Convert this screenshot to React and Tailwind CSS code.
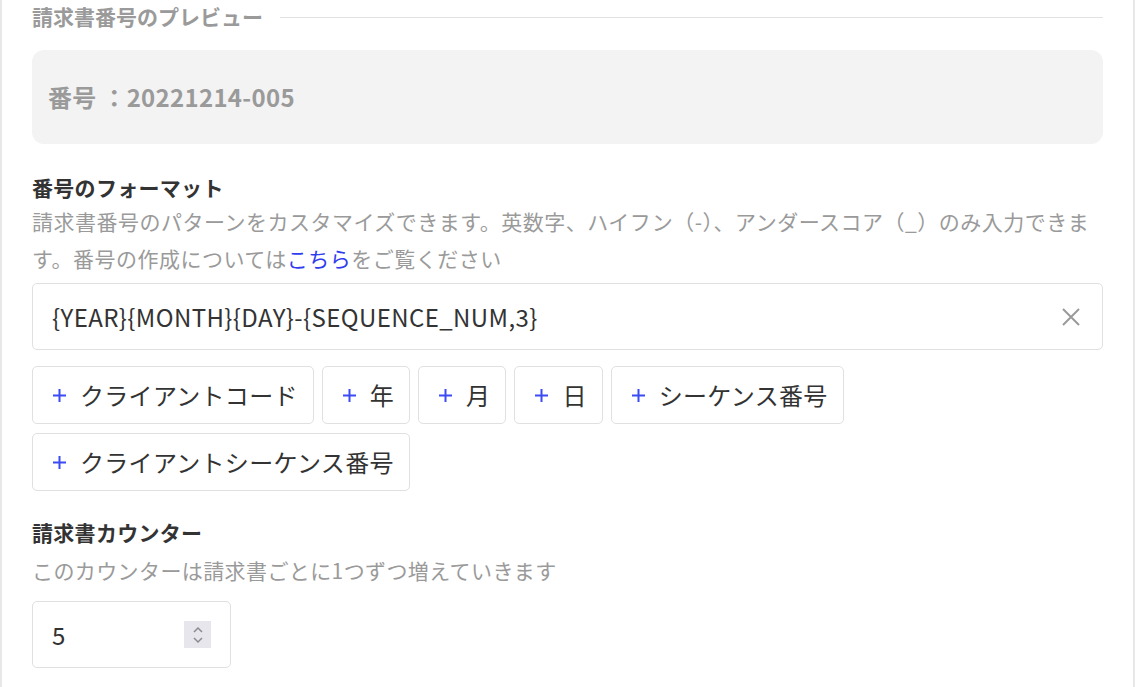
import React from "react";

const font = { fontFamily: '"Noto Sans CJK JP", "Noto Sans", sans-serif' };

const chips = [
  "クライアントコード",
  "年",
  "月",
  "日",
  "シーケンス番号",
  "クライアントシーケンス番号",
];

const Plus = () => (
  <svg width="15" height="15" viewBox="0 0 15 15" className="shrink-0">
    <path d="M7.5 1v13M1 7.5h13" stroke="#3b4bf5" strokeWidth="2" />
  </svg>
);

export default function App() {
  return (
    <div
      className="min-h-screen bg-white border-x-2 border-[#e8e8e8] px-[30px] pt-[2px] text-[#333]"
      style={font}
    >
      {/* preview header */}
      <div className="flex items-center h-[30px]">
        <span className="text-[21px] font-bold text-[#9a9a9a]">請求書番号のプレビュー</span>
        <div className="flex-1 ml-[17px] h-px bg-[#e2e2e2]" />
      </div>

      <div className="mt-[18px] h-[94px] rounded-[12px] bg-[#f3f3f3] flex items-center pl-[16px]">
        <span className="text-[24px] font-bold text-[#9a9a9a] tracking-[0.3px]">
          番号 ：20221214-005
        </span>
      </div>

      {/* format */}
      <div className="mt-[28px] text-[21px] font-bold leading-[30px] tracking-[0.3px] text-[#333]">
        番号のフォーマット
      </div>
      <p className="mt-[1px] text-[21px] leading-[37px] tracking-[0.5px] text-[#9a9a9a]">
        請求書番号のパターンをカスタマイズできます。英数字、ハイフン（-）、アンダースコア（_）のみ入力できます。番号の作成については
        <span className="text-[#2f3cf0]">こちら</span>をご覧ください
      </p>

      <div className="mt-[6px] h-[67px] border border-[#e0e0e0] rounded-[5px] flex items-center pl-[19px] pr-[21px]">
        <span className="flex-1 text-[24px] tracking-[0.4px] text-[#333]">
          {"{YEAR}{MONTH}{DAY}-{SEQUENCE_NUM,3}"}
        </span>
        <svg width="20" height="20" viewBox="0 0 20 20">
          <path d="M2 2l16 16M18 2L2 18" stroke="#9a9a9a" strokeWidth="2" />
        </svg>
      </div>

      <div className="mt-[16px] flex flex-wrap gap-x-[8px] gap-y-[9px] max-w-[820px]">
        {chips.map((c) => (
          <div
            key={c}
            className="h-[58px] border border-[#e0e0e0] rounded-[5px] flex items-center gap-[13px] pl-[19px] pr-[15px] text-[24px] tracking-[0.3px] text-[#333]"
          >
            <Plus />
            <span>{c}</span>
          </div>
        ))}
      </div>

      {/* counter */}
      <div className="mt-[26px] text-[21px] font-bold leading-[30px] tracking-[0.3px] text-[#333]">
        請求書カウンター
      </div>
      <p className="mt-[5px] text-[21px] leading-[37px] tracking-[0.4px] text-[#9a9a9a]">
        このカウンターは請求書ごとに1つずつ増えていきます
      </p>

      <div className="mt-[12px] w-[199px] h-[67px] border border-[#e0e0e0] rounded-[5px] flex items-center pl-[19px] pr-[19px]">
        <span className="flex-1 text-[24px] text-[#333]">5</span>
        <div className="w-[27px] h-[27px] bg-[#e6e6ec] flex items-center justify-center">
          <svg width="14" height="20" viewBox="0 0 14 20">
            <path d="M3 7l4-4 4 4M3 13l4 4 4-4" fill="none" stroke="#8a8a90" strokeWidth="1.5" />
          </svg>
        </div>
      </div>
    </div>
  );
}
